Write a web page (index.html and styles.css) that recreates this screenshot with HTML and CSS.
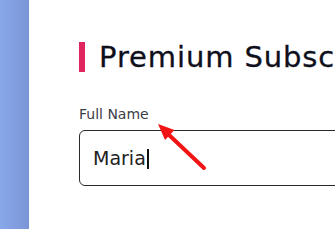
FILE: index.html
```html
<!DOCTYPE html>
<html lang="en">
<head>
  <meta charset="UTF-8">
  <meta name="viewport" content="width=device-width, initial-scale=1.0">
  <title>Premium Subscription</title>
  <link rel="stylesheet" href="styles.css">
</head>
<body>
  <div class="layout">
    <aside class="sidebar"></aside>
    <main class="content">
      <h1 class="title">Premium Subscription</h1>
      <form class="signup">
        <label class="label" for="name">Full Name</label>
        <div class="field" id="name">Maria<span class="caret"></span></div>
      </form>
      <svg class="pointer" width="60" height="60" viewBox="0 0 60 60">
        <line x1="51" y1="52" x2="15" y2="18" stroke="#f01414" stroke-width="4" stroke-linecap="round"/>
        <polygon points="5,8 21.5,14 12,24" fill="#f01414"/>
      </svg>
    </main>
  </div>
</body>
</html>
```

FILE: styles.css
```css
html, body {
  margin: 0;
  padding: 0;
  height: 100%;
  overflow: hidden;
  background-color: white;
}
body {
  font-family: "DejaVu Sans", "Open Sans", sans-serif;
}
.layout {
  display: flex;
  height: 100%;
}
.sidebar {
  width: 29px;
  flex-shrink: 0;
  background: linear-gradient(to right, #88a8ea, #7a95d6);
}
.content {
  position: relative;
  flex: 1;
  padding: 42px 0 0 50px;
  white-space: nowrap;
}
.title {
  margin: 0 0 33px 0;
  padding-left: 14px;
  border-left: 6px solid #e0245e;
  font-size: 29px;
  line-height: 30px;
  font-weight: normal;
  letter-spacing: 0.9px;
  -webkit-text-stroke: 0.3px #0f0f1c;
  color: #0f0f1c;
}
.signup {
  display: flex;
  flex-direction: column;
}
.label {
  font-size: 14px;
  line-height: 18px;
  color: #3c3c48;
  margin-bottom: 7px;
}
.field {
  width: 400px;
  height: 54px;
  box-sizing: content-box;
  border: 1px solid #2a2a2a;
  border-radius: 6px;
  padding: 0 13px;
  font-size: 19px;
  line-height: 54px;
  color: #222;
}
.caret {
  display: inline-block;
  width: 2px;
  height: 20px;
  margin-left: 1px;
  vertical-align: -4px;
  background-color: #111;
}
.pointer {
  position: absolute;
  left: 124px;
  top: 116px;
}
```
